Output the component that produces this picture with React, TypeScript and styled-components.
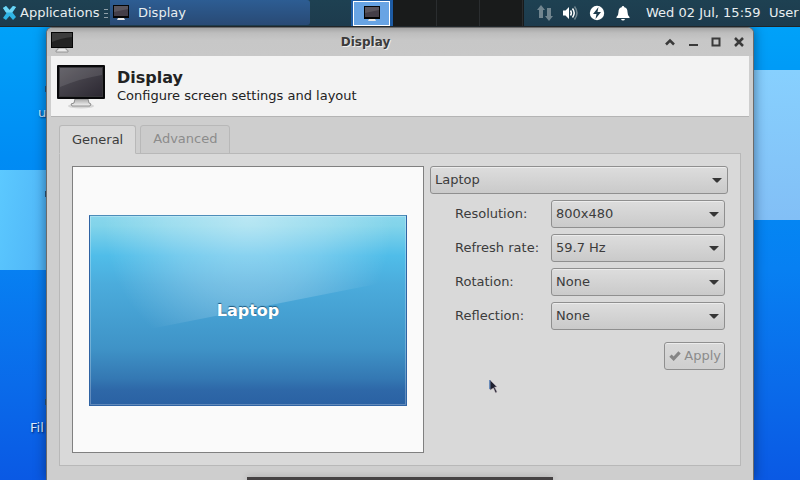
import React from "react";
import styled, { createGlobalStyle, css } from "styled-components";

const GlobalStyle = createGlobalStyle`
  *, *::before, *::after { box-sizing: border-box; }
  html, body { margin: 0; }
  body, button, select {
    font-family: "DejaVu Sans", sans-serif;
    font-size: 13px;
    line-height: 16px;
  }
  h1, h2, p { margin: 0; }
`;

const Desktop = styled.div`
  position: relative;
  display: flex;
  flex-direction: column;
  height: 100vh;
  overflow: hidden;
  background: linear-gradient(#00a5fb 0%, #00a0f8 8%, #008cf4 33%, #0780f2 56%, #0a6bea 80%, #0a59e4 100%);
`;

const WallpaperPatch = styled.div<{ $side: "left" | "right" }>`
  position: absolute;
  ${(p) =>
    p.$side === "left"
      ? css`
          left: 0;
          top: 170px;
          width: 120px;
          height: 100px;
          background: linear-gradient(100deg, #5cc9ff, #50b7f8 40%);
        `
      : css`
          right: 0;
          top: 70px;
          width: 120px;
          height: 150px;
          background: linear-gradient(#87d0fe, #82bff6);
        `}
`;

const DesktopLabel = styled.span<{ $top: number; $left: number }>`
  position: absolute;
  top: ${(p) => p.$top}px;
  left: ${(p) => p.$left}px;
  color: #dcecff;
  text-shadow: 1px 1px 2px #001c50;
`;

const IconSliver = styled.span<{ $top: number }>`
  position: absolute;
  top: ${(p) => p.$top}px;
  left: 45px;
  width: 4px;
  height: 6px;
  background: #275477;
`;

/* ---------- top panel ---------- */

const Panel = styled.header`
  position: relative;
  z-index: 2;
  display: flex;
  flex: none;
  height: 27px;
  border-bottom: 1px solid #20262a;
  background: linear-gradient(#1e4152, #1d3b4d);
  color: #e9eef0;
  overflow: hidden;
`;

const MenuButton = styled.button`
  display: flex;
  flex: none;
  align-items: center;
  gap: 3px;
  width: 102px;
  padding: 0 0 0 2px;
  border: 0;
  background: none;
  color: inherit;
  white-space: nowrap;
`;

const Handle = styled.span`
  display: flex;
  flex: none;
  flex-direction: column;
  justify-content: center;
  gap: 3px;
  width: 8px;
  padding: 0 2px;
  i {
    height: 1px;
    background: #8f9fa8;
  }
`;

const TaskList = styled.div`
  display: flex;
  flex: 1 1 0;
  min-width: 0;
`;

const TaskButton = styled.button`
  display: flex;
  align-items: center;
  gap: 9px;
  width: 200px;
  height: 25px;
  padding: 0 3px;
  border: 0;
  border-radius: 0 3px 3px 0;
  background: linear-gradient(#2d5d93, #294a75);
  color: inherit;
`;

const Pager = styled.div`
  display: flex;
  flex: none;
  width: 173px;
  background: #171a1b;
`;

const Workspace = styled.button<{ $active?: boolean }>`
  display: flex;
  flex: none;
  align-items: center;
  justify-content: center;
  width: 43px;
  padding: 0;
  border: 0;
  border-right: 1px solid #2a2d2f;
  background: #191b1b;
  ${(p) =>
    p.$active &&
    css`
      width: 42px;
      margin-right: 1px;
      border: 2px solid #1d5ba3;
      border-width: 1px 3px 0 2px;
      background: #68a4e4;
      box-shadow: inset 0 0 0 1px #ffffff;
    `}
`;

const Tray = styled.div`
  display: flex;
  flex: none;
  align-items: center;
  gap: 9px;
  width: 122px;
  padding-left: 12px;
`;

const Clock = styled.time`
  flex: none;
  width: 123px;
  line-height: 26px;
  white-space: nowrap;
`;

const UserButton = styled.button`
  flex: none;
  width: 31px;
  padding: 0;
  border: 0;
  background: none;
  color: inherit;
  text-align: left;
  white-space: nowrap;
`;

/* ---------- window ---------- */

const Window = styled.main`
  position: relative;
  display: flex;
  flex: 1;
  flex-direction: column;
  margin: 0 46px;
  border: 1px solid #6b6b6b;
  border-bottom: 0;
  border-radius: 6px 6px 0 0;
  background: #cecece;
  color: #3c3c3c;
  box-shadow: 0 0 12px rgba(0, 20, 50, 0.5);
`;

const TitleBar = styled.div`
  display: flex;
  align-items: center;
  height: 28px;
  padding: 0 3px 0 4px;
  border-radius: 5px 5px 0 0;
  background: linear-gradient(#a5a5a5, #bdbdbd 5px, #c7c7c7 12px, #c8c8c8);
`;

const WindowTitle = styled.h1`
  flex: 1;
  font-size: 12px;
  line-height: 16px;
  text-align: center;
  color: #3b3b3b;
  text-shadow: 1px 1px 0 #eeeeee;
`;

const WindowButton = styled.button`
  display: flex;
  align-items: center;
  justify-content: center;
  width: 23px;
  height: 20px;
  padding: 0;
  border: 0;
  background: none;
  color: #3a3a3a;
`;

const Heading = styled.div`
  display: flex;
  align-items: center;
  gap: 12px;
  height: 61px;
  margin: 0 4px;
  padding-left: 6px;
  border-bottom: 1px solid #b4b4b4;
  background: #f3f3f3;
  color: #222222;
`;

const HeadingTitle = styled.h2`
  font-size: 16px;
  line-height: 20px;
`;

const Notebook = styled.div`
  display: flex;
  flex-direction: column;
  margin: 8px 12px 0;
`;

const Tabs = styled.div`
  display: flex;
  gap: 4px;
  height: 29px;
`;

const Tab = styled.button<{ $active?: boolean }>`
  padding: 0 12px 2px;
  border: 1px solid #b8b8b8;
  border-radius: 3px 3px 0 0;
  background: #cbcbcb;
  color: #8c8c8c;
  ${(p) =>
    p.$active &&
    css`
      position: relative;
      padding-bottom: 0;
      border-bottom-color: #d9d9d9;
      background: #d9d9d9;
      color: #3c3c3c;
    `}
`;

const Page = styled.div`
  display: flex;
  gap: 6px;
  height: 313px;
  margin-top: -1px;
  padding: 12px;
  border: 1px solid #b8b8b8;
  background: #d9d9d9;
`;

const Preview = styled.div`
  display: flex;
  flex: 1;
  align-items: center;
  justify-content: center;
  height: 287px;
  padding: 2px 16px 0;
  border: 1px solid #808080;
  background: #fafafa;
`;

const Screen = styled.div`
  position: relative;
  display: flex;
  flex: 1;
  align-items: center;
  justify-content: center;
  height: 191px;
  border: 1px solid #2f63a3;
  border-top-color: #4d8db9;
  background: linear-gradient(#88d6ec 0%, #82d4ea 5%, #50bde9 21%, #4bacdc 36%, #3f93c7 70%, #3478b3 86%, #2e68a8 92%, #2a61a3 100%);
  color: #ffffff;
  font-size: 16px;
  line-height: 20px;
  font-weight: 700;
  text-shadow: 0 -1px 1px #1d587f;
  &::after {
    content: "";
    position: absolute;
    inset: 0;
    border: 1px solid rgba(255, 255, 255, 0.26);
  }
`;

const Shine = styled.div`
  position: absolute;
  inset: 0;
  clip-path: polygon(0 0, 100% 0, 100% 33%, 0 66%);
  background: radial-gradient(ellipse 46% 80% at 50% 0, rgba(255, 255, 255, 0.42), rgba(255, 255, 255, 0.22) 55%, rgba(255, 255, 255, 0));
`;

const ScreenName = styled.span`
  position: relative;
`;

const Settings = styled.form`
  display: flex;
  flex: none;
  flex-direction: column;
  gap: 6px;
  width: 298px;
`;

const Field = styled.div`
  display: grid;
  grid-template-columns: 96px 1fr;
  align-items: center;
  padding: 0 3px 0 25px;
  label {
    white-space: nowrap;
  }
`;

const SelectFrame = styled.div`
  display: grid;
  align-items: center;
  > * {
    grid-area: 1 / 1;
  }
  svg {
    justify-self: end;
    margin-right: 6px;
    pointer-events: none;
  }
`;

const raised = css`
  height: 28px;
  border: 1px solid #8f8f8f;
  border-radius: 3px;
  background: linear-gradient(#dddddd, #cacaca);
  box-shadow: inset 0 1px 0 #ececec;
`;

const Select = styled.select`
  ${raised}
  width: 100%;
  appearance: none;
  padding: 0 24px 0 4px;
  color: #3c3c3c;
`;

const ApplyButton = styled.button`
  ${raised}
  display: flex;
  align-self: flex-end;
  align-items: center;
  gap: 3px;
  margin: 6px 3px 0 0;
  padding: 0 3px 1px 4px;
  background: linear-gradient(#d9d9d9, #cfcfcf);
  color: #8b8b8b;
`;

const Dock = styled.div`
  position: absolute;
  bottom: 0;
  left: calc(50% - 153px);
  width: 306px;
  height: 3px;
  background: #454243;
  box-shadow: 0 0 6px rgba(0, 0, 0, 0.25);
`;

const Pointer = styled.svg`
  position: absolute;
  top: 379px;
  left: 489px;
`;

/* ---------- drawings ---------- */

function MonitorIcon({ size, id }: { size: number; id: string }) {
  return (
    <svg width={size} height={size} viewBox="0 0 48 48" aria-hidden="true">
      <defs>
        <linearGradient id={id} x1="0" y1="0" x2="1" y2="1">
          <stop offset="0" stopColor="#56545b" />
          <stop offset="1" stopColor="#2c2832" />
        </linearGradient>
        <linearGradient id={id + "b"} x1="0" y1="0" x2="0" y2="1">
          <stop offset="0" stopColor="#a8a8a8" />
          <stop offset="1" stopColor="#f4f4f4" />
        </linearGradient>
      </defs>
      <ellipse cx="24" cy="44" rx="13" ry="2.500" fill="#000" opacity="0.12" />
      <path d="M18 37h13l1 4 2 1-1 2H15l-1-2 3-1z" fill={`url(#${id}b)`} stroke="#8d8d8d" strokeWidth="1" />
      <rect x="0" y="3" width="48" height="34" rx="1" fill="#08080a" />
      <rect x="2.500" y="5.500" width="43" height="29" fill={`url(#${id})`} stroke="#37363a" strokeWidth="1" />
      <path d="M3 6h42v7Q25 16 3 25z" fill="#fff" opacity="0.1" />
    </svg>
  );
}

function SmallMonitor() {
  return (
    <svg width="16" height="16" viewBox="0 0 16 16" aria-hidden="true">
      <path d="M5 13h6l1 2H4z" fill="#e8e8e8" />
      <rect width="16" height="13" fill="#050505" />
      <rect x="1" y="1" width="14" height="10" fill="#443e48" />
      <path d="M1 1h14v3L1 7z" fill="#5a555d" />
    </svg>
  );
}

function TitleMonitor() {
  return (
    <svg width="22" height="22" viewBox="0 0 22 22" aria-hidden="true">
      <path d="M7 17h8v1.500l2 1v1.500H5v-1.500l2-1z" fill="#e8e8e8" stroke="#858585" strokeWidth="0.800" />
      <rect width="22" height="16" y="1" fill="#050505" />
      <rect x="1" y="2" width="20" height="14" fill="#222222" />
      <path d="M1 2h20v4Q10 7 1 11z" fill="#3d3d3d" />
    </svg>
  );
}

function Arrow() {
  return (
    <svg width="10" height="6" viewBox="0 0 10 6" aria-hidden="true">
      <path d="M0 1h10L5.600 5.600h-1.200z" fill="#363636" />
    </svg>
  );
}

function MenuLogo() {
  return (
    <svg width="15" height="16" viewBox="0 0 15 16" aria-hidden="true">
      <path
        d="M1 3l3-2 3.500 4L11 1l3 1-3.500 5.500L14 12l-3 3-3.500-4L4 15l-3-2 3.500-5z"
        fill="#2fb5e6"
      />
      <path d="M1 3l3-2 3.500 4L11 1l3 1-4 5.500-6 0z" fill="#6fd6f5" />
    </svg>
  );
}

function Updown() {
  return (
    <svg width="18" height="18" viewBox="0 0 18 18" fill="#71858f" aria-hidden="true">
      <path d="M5 1l4 5H7v8H3V6H1zM11 4h4v8h2l-4 5-4-5h2z" />
    </svg>
  );
}

function Volume() {
  return (
    <svg width="17" height="16" viewBox="0 0 17 16" fill="none" strokeWidth="1.500" aria-hidden="true">
      <path d="M0 5.500h2.500L6 2v12l-3.500-3.500H0z" fill="#fff" />
      <path d="M7.500 5.500q1.800 2.500 0 5M9.500 3.500q3.400 4.500 0 9" stroke="#fff" />
      <path d="M11.500 1.500q5 6.500 0 13" stroke="#71858f" />
    </svg>
  );
}

function Power() {
  return (
    <svg width="16" height="16" viewBox="0 0 16 16" aria-hidden="true">
      <circle cx="8" cy="8" r="7.200" fill="#fff" />
      <path d="M9.500 2L4 9h3.500L6.500 14 12 7H8.500z" fill="#1d3c4d" />
    </svg>
  );
}

function Bell() {
  return (
    <svg width="18" height="16" viewBox="-2 0 18 16" fill="#fff" aria-hidden="true">
      <path d="M7 1q1.200 0 1.300 1.200Q11.500 3 11.500 7q0 3.500 2 5v1H.5v-1q2-1.500 2-5 0-4 3.200-4.800Q5.800 1 7 1zM5 14h4q-.5 1.500-2 1.500T5 14z" />
    </svg>
  );
}

/* ---------- page ---------- */

const fields = [
  { id: "resolution", label: "Resolution:", value: "800x480" },
  { id: "refresh", label: "Refresh rate:", value: "59.7 Hz" },
  { id: "rotation", label: "Rotation:", value: "None" },
  { id: "reflection", label: "Reflection:", value: "None" },
];

function Dropdown({ id, value, label }: { id: string; value: string; label?: string }) {
  return (
    <SelectFrame>
      <Select id={id} aria-label={label} defaultValue={value}>
        <option>{value}</option>
      </Select>
      <Arrow />
    </SelectFrame>
  );
}

export default function App() {
  return (
    <Desktop>
      <GlobalStyle />
      <WallpaperPatch $side="left" />
      <WallpaperPatch $side="right" />
      <IconSliver $top={86} />
      <IconSliver $top={191} />
      <IconSliver $top={399} />
      <DesktopLabel $top={105} $left={38}>u</DesktopLabel>
      <DesktopLabel $top={420} $left={30}>Fil</DesktopLabel>

      <Panel>
        <MenuButton>
          <MenuLogo />
          Applications
        </MenuButton>
        <Handle>
          <i />
          <i />
          <i />
        </Handle>
        <TaskList>
          <TaskButton>
            <SmallMonitor />
            Display
          </TaskButton>
        </TaskList>
        <Pager>
          <Workspace $active aria-label="Workspace 1">
            <SmallMonitor />
          </Workspace>
          <Workspace aria-label="Workspace 2" />
          <Workspace aria-label="Workspace 3" />
          <Workspace aria-label="Workspace 4" />
        </Pager>
        <Tray>
          <Updown />
          <Volume />
          <Power />
          <Bell />
        </Tray>
        <Clock>Wed 02 Jul, 15:59</Clock>
        <UserButton>User</UserButton>
      </Panel>

      <Window>
        <TitleBar>
          <TitleMonitor />
          <WindowTitle>Display</WindowTitle>
          <WindowButton aria-label="Shade">
            <svg width="10" height="8" viewBox="0 0 10 8" fill="none" stroke="currentColor" strokeWidth="2.500">
              <path d="M1 6.500l4-4 4 4" />
            </svg>
          </WindowButton>
          <WindowButton aria-label="Minimize">
            <svg width="10" height="10" viewBox="0 0 10 10" fill="currentColor">
              <path d="M1 7h9v2H1z" />
            </svg>
          </WindowButton>
          <WindowButton aria-label="Maximize">
            <svg width="10" height="10" viewBox="0 0 10 10" fill="none" stroke="currentColor" strokeWidth="2">
              <path d="M1.500 1.500h7v7h-7z" />
            </svg>
          </WindowButton>
          <WindowButton aria-label="Close">
            <svg width="10" height="10" viewBox="0 0 10 10" fill="none" stroke="currentColor" strokeWidth="2.500">
              <path d="M1 1l8 8M9 1l-8 8" />
            </svg>
          </WindowButton>
        </TitleBar>

        <Heading>
          <MonitorIcon size={48} id="monitor" />
          <div>
            <HeadingTitle>Display</HeadingTitle>
            <p>Configure screen settings and layout</p>
          </div>
        </Heading>

        <Notebook>
          <Tabs role="tablist">
            <Tab role="tab" aria-selected="true" $active>General</Tab>
            <Tab role="tab" aria-selected="false">Advanced</Tab>
          </Tabs>
          <Page role="tabpanel">
            <Preview>
              <Screen>
                <Shine />
                <ScreenName>Laptop</ScreenName>
              </Screen>
            </Preview>
            <Settings>
              <Dropdown id="output" value="Laptop" label="Output" />
              {fields.map((f) => (
                <Field key={f.id}>
                  <label htmlFor={f.id}>{f.label}</label>
                  <Dropdown id={f.id} value={f.value} />
                </Field>
              ))}
              <ApplyButton type="button" disabled>
                <svg width="12" height="10" viewBox="0 0 13 11" fill="none" stroke="#858585" strokeWidth="3.500">
                  <path d="M1.500 5l3.500 3.500L11.500 1.500" />
                </svg>
                Apply
              </ApplyButton>
            </Settings>
          </Page>
        </Notebook>
      </Window>

      <Dock />
      <Pointer width="9" height="15" viewBox="0 0 9 15" aria-hidden="true">
        <path d="M1 1l7 7H5.500L8 13l-1.500.8L4.500 9 1 11z" fill="#1e2030" stroke="#b9a9b0" strokeWidth="0.500" />
        <path d="M.8 1v9" stroke="#3f6fb0" strokeWidth="1" />
      </Pointer>
    </Desktop>
  );
}
